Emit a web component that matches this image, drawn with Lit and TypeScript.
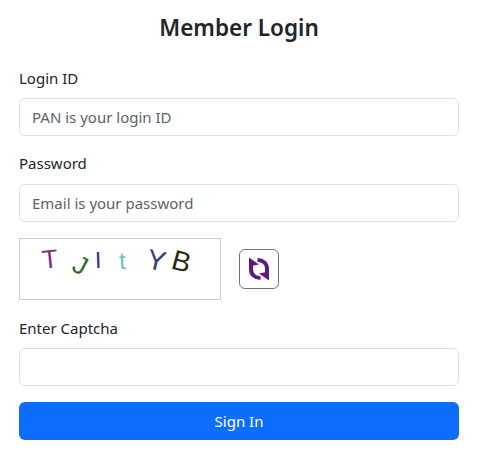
import { LitElement, html, css } from "lit";
import { customElement } from "lit/decorators.js";

const LETTERS = [
  { c: "T", x: 22, y: 7, size: 26, rot: -6, color: "#7b2d8b" },
  { c: "J", x: 54, y: 13, size: 26, rot: 28, color: "#2f6b2f" },
  { c: "I", x: 75, y: 10, size: 23, rot: -2, color: "#3b2a86" },
  { c: "t", x: 99, y: 10, size: 24, rot: -3, color: "#6cc5b8" },
  { c: "Y", x: 127, y: 8, size: 28, rot: 12, color: "#35407f" },
  { c: "B", x: 152, y: 9, size: 28, rot: 15, color: "#2e2713" },
];

@customElement("app-root")
export class AppRoot extends LitElement {
  static styles = css`
    :host {
      display: block;
      background: #fff;
      font-family: "Noto Sans", "Open Sans", sans-serif;
      color: #212529;
    }
    .card {
      display: flex;
      flex-direction: column;
      padding: 11px 20px 17px 19px;
    }
    h1 {
      margin: 0 0 21.5px;
      font-size: 22.5px;
      line-height: 34px;
      font-weight: 600;
      text-align: center;
    }
    label {
      display: block;
      font-size: 15px;
      line-height: 23px;
      margin-bottom: 8.5px;
    }
    .field {
      margin-bottom: 16px;
    }
    .control {
      display: block;
      box-sizing: border-box;
      width: 100%;
      height: 38px;
      padding: 0 12px;
      font: inherit;
      font-size: 15px;
      color: #212529;
      background: #fff;
      border: 1px solid #dee2e6;
      border-radius: 6px;
      outline: none;
    }
    .control::placeholder {
      color: #5c636a;
      opacity: 1;
    }
    .captcha-row {
      display: flex;
      align-items: center;
      gap: 18px;
      margin-bottom: 17px;
    }
    .captcha {
      position: relative;
      box-sizing: border-box;
      width: 202px;
      height: 62px;
      border: 1px solid #ccc;
      background: #fff;
      overflow: hidden;
    }
    .captcha span {
      position: absolute;
      font-family: "Liberation Sans", sans-serif;
      line-height: 1;
    }
    .refresh {
      display: flex;
      align-items: center;
      justify-content: center;
      box-sizing: border-box;
      width: 40px;
      height: 40px;
      padding: 0;
      background: #fff;
      border: 1px solid #6c757d;
      border-radius: 6px;
    }
    .refresh svg {
      width: 30px;
      height: 30px;
    }
    .arc {
      fill: none;
      stroke: #5f1a80;
      stroke-width: 4;
    }
    .head {
      fill: #5f1a80;
    }
    .submit {
      height: 38px;
      border: none;
      border-radius: 6px;
      background: #0d6efd;
      color: #fff;
      font: inherit;
      font-size: 15px;
    }
  `;

  render() {
    return html`
      <form class="card" @submit=${(e: Event) => e.preventDefault()}>
        <h1>Member Login</h1>
        <div class="field">
          <label>Login ID</label>
          <input class="control" placeholder="PAN is your login ID" />
        </div>
        <div class="field">
          <label>Password</label>
          <input class="control" placeholder="Email is your password" />
        </div>
        <div class="captcha-row">
          <div class="captcha">
            ${LETTERS.map(
              (l) => html`<span
                style="left:${l.x}px;top:${l.y}px;font-size:${l.size}px;color:${l.color};transform:rotate(${l.rot}deg)"
                >${l.c}</span
              >`
            )}
          </div>
          <button class="refresh" type="button" aria-label="Refresh captcha">
            <svg viewBox="0 0 30 30">
              <path class="arc" d="M16.5 24C11 24 7 20.5 7 15.5V10" />
              <path class="head" d="M5 3.5L15 10.5L5 12.5Z" />
              <path class="arc" d="M13.5 6C19 6 23 9.5 23 14.5V20" />
              <path class="head" d="M25 26.5L15 19.5L25 17.5Z" />
            </svg>
          </button>
        </div>
        <div class="field">
          <label>Enter Captcha</label>
          <input class="control" />
        </div>
        <button class="submit" type="submit">Sign In</button>
      </form>
    `;
  }
}
